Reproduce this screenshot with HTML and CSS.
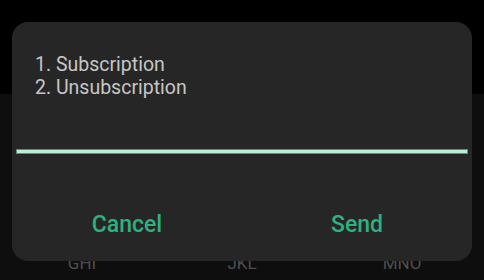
FILE: index.html
```html
<!DOCTYPE html>
<html>
<head>
<meta charset="utf-8">
<link rel="stylesheet" href="styles.css">
</head>
<body>
<div class="screen">
  <div class="top-area"></div>
  <div class="keyboard">
    <div class="key-row">
      <span class="key-label">GHI</span>
      <span class="key-label">JKL</span>
      <span class="key-label">MNO</span>
    </div>
  </div>
  <div class="dialog">
    <div class="message">
      <div class="line">1. Subscription</div>
      <div class="line">2. Unsubscription</div>
    </div>
    <div class="input-underline"></div>
    <div class="actions">
      <div class="action">Cancel</div>
      <div class="action">Send</div>
    </div>
  </div>
</div>
</body>
</html>
```
FILE: styles.css
```css
html, body {
  margin: 0;
  padding: 0;
  background: #000;
}
.screen {
  position: relative;
  width: 484px;
  height: 280px;
  overflow: hidden;
  display: flex;
  flex-direction: column;
  font-family: Roboto, "Noto Sans", sans-serif;
}
.top-area {
  height: 94px;
  background: #000;
  flex: none;
}
.keyboard {
  flex: 1;
  background: #0e0e0e;
  display: flex;
  flex-direction: column;
  justify-content: flex-end;
}
.key-row {
  display: grid;
  grid-template-columns: repeat(3, 1fr);
  padding: 0 2px 8px 2px;
  height: 20px;
  align-items: end;
}
.key-label {
  text-align: center;
  color: #4e4e4e;
  font-size: 17px;
  line-height: 17px;
}
.dialog {
  position: absolute;
  left: 12px;
  top: 22px;
  width: 460px;
  height: 239px;
  background: #262626;
  border-radius: 16px;
  display: flex;
  flex-direction: column;
}
.message {
  padding: 32px 0 0 23px;
  color: #c6c6c6;
  font-size: 19.5px;
  line-height: 22.5px;
}
.input-underline {
  margin: 51px 5px 0 5px;
  height: 3px;
  background: #bcefd8;
  box-shadow: 0 0 0 1px #5f8a78;
}
.actions {
  display: grid;
  grid-template-columns: 1fr 1fr;
  margin-top: 58px;
}
.action {
  text-align: center;
  color: #2fb07f;
  font-size: 23px;
  font-weight: 500;
  line-height: 27px;
}
```
